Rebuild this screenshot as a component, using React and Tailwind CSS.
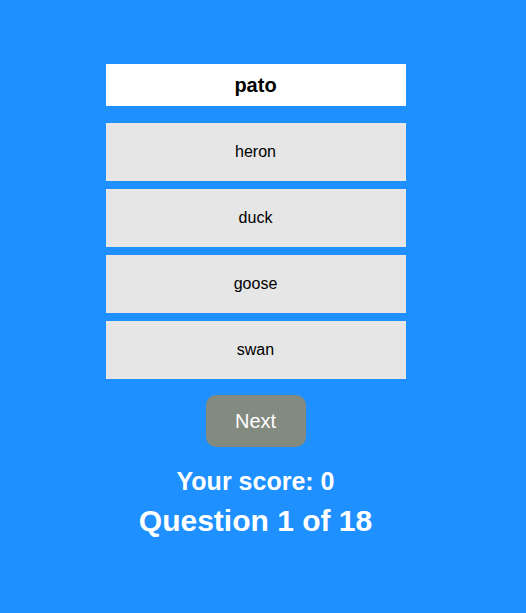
export default function App() {
  const options = ['heron', 'duck', 'goose', 'swan']

  return (
    <div className="min-h-[613px] bg-[#1e90ff] font-['Liberation_Sans',Arial,sans-serif] pt-16">
      <div className="w-[511px]">
        <div className="w-[300px] mx-auto flex flex-col">
          <div className="h-[42px] bg-white flex items-center justify-center text-xl font-bold text-black">
            pato
          </div>
          <div className="mt-[17px] flex flex-col gap-2">
            {options.map((opt) => (
              <button
                key={opt}
                className="h-[58px] bg-[#e6e6e6] text-base text-black flex items-center justify-center"
              >
                {opt}
              </button>
            ))}
          </div>
          <button className="mt-4 mx-auto w-[100px] h-[52px] rounded-[10px] bg-[#838b80] text-white text-xl">
            Next
          </button>
          <div className="mt-[18px] text-center text-white font-bold text-[25px] leading-8">Your score: 0</div>
          <div className="mt-1.5 text-center text-white font-bold text-[30px] leading-9">Question 1 of 18</div>
        </div>
      </div>
    </div>
  )
}
